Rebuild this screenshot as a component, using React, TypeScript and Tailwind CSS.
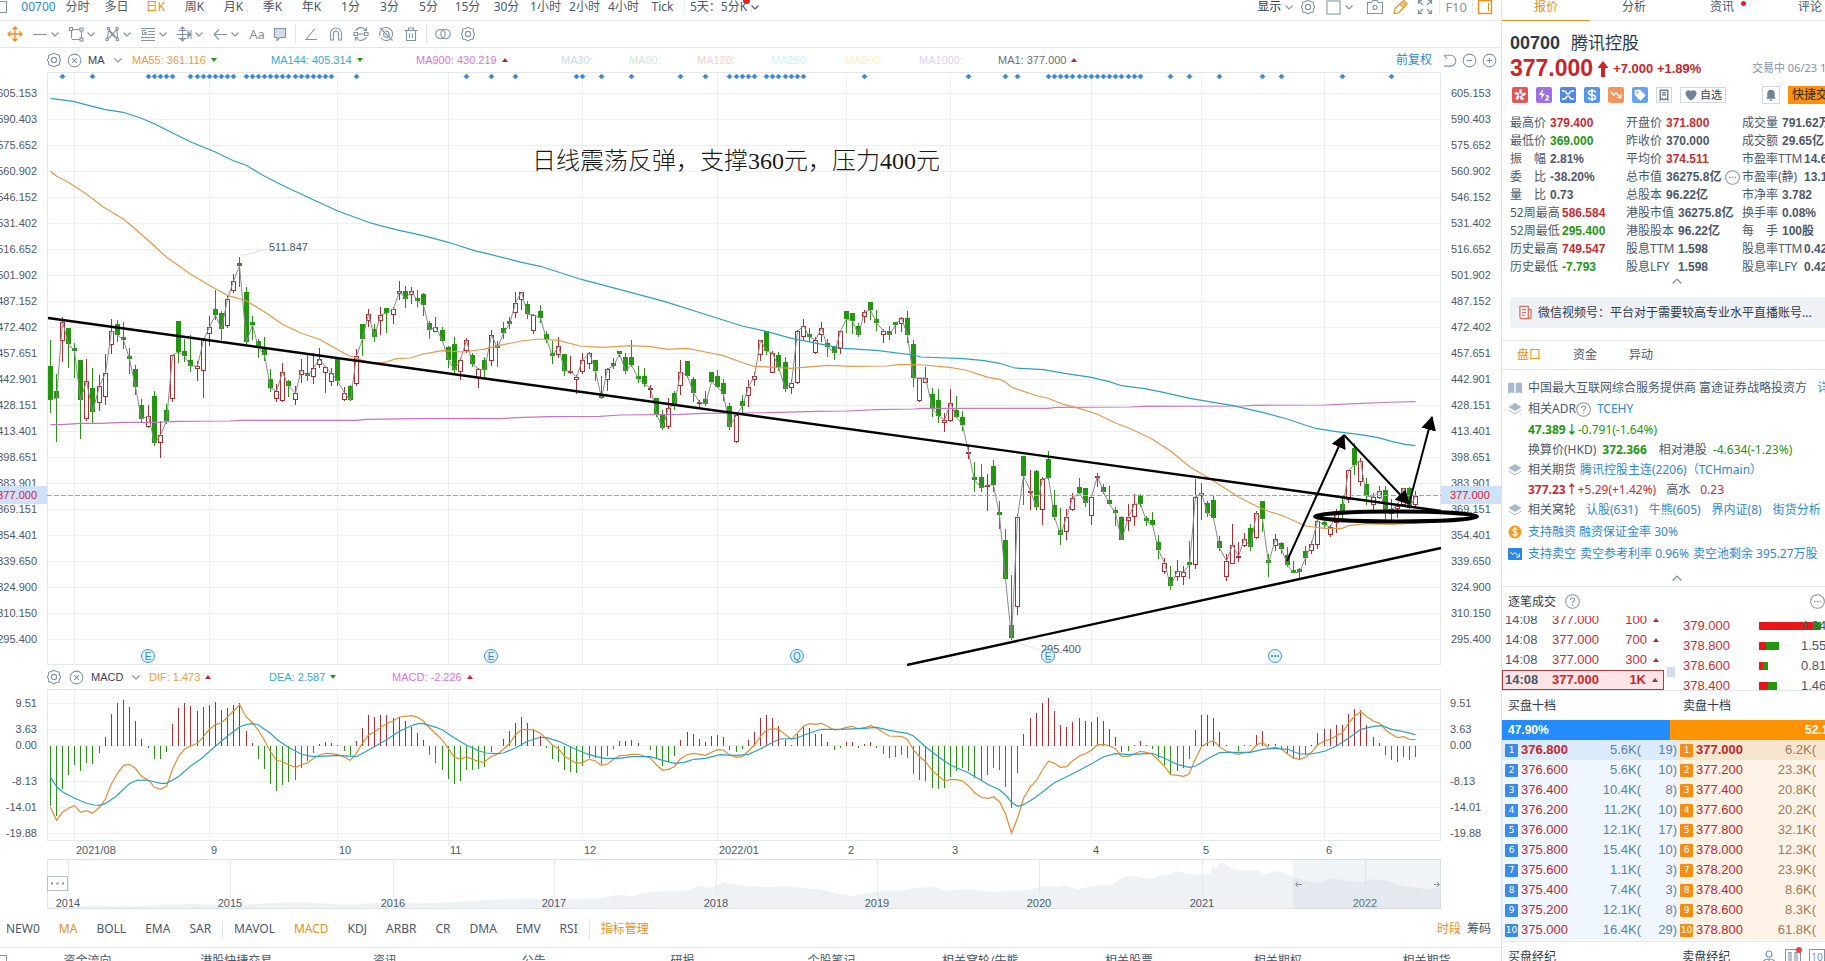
import React from "react";

/* ------------------------------------------------------------------ */
/* Chart data                                                          */
/* ------------------------------------------------------------------ */

/* Bars sit six pixels apart, with one extra pixel after every eighth bar. */
const barX = (i: number) => 50.5 + 6 * i + Math.floor(i / 8);

/* direction, high, body top, body bottom, low; in thirds of a pixel */
const CANDLES_A = `g840,918,1020,1058 g942,993,1014,1145 r772,785,844,905 g804,804,852,923 g850,864,872,953 g900,900,1020,1136
r898,964,1076,1082 g924,984,1055,1090 r945,978,1028,1052 r882,940,1010,1036 r777,814,856,882 g780,792,824,846 g786,831,840,868
g864,888,896,942 g915,927,980,1004 g1018,1035,1077,1085 r1036,1069,1102,1103 g993,1008,1149,1157 r1084,1126,1148,1193
g1031,1050,1082,1092 r886,886,1016,1025 g783,783,876,908 g838,873,888,906 g826,900,917,935 r903,918,926,962 r833,840,934,1013
r768,802,821,857 g690,747,765,780 g754,759,806,840 r708,718,797,803 r641,664,692,700 g591,609,617,680 g682,696,846,852
g768,786,795,840 g838,842,864,893 g831,862,885,902 g928,957,983,995 r972,994,1016,1025 r910,937,1022,1025 g960,963,978,1010
r978,1000,1019,1034 r898,931,946,968 g886,939,947,962 r880,925,952,973 r864,898,914,925 r918,922,940,999 r925,940,967,979
g895,898,964,977 r980,1000,1019,1022 g976,979,1019,1022 r867,889,973,977 g792,792,836,888 r747,763,782,800 g792,807,830,845
r742,766,784,824 g744,744,759,819 r741,748,766,792 r663,694,702,719 g678,694,716,743 r681,694,704,732 g690,714,722,741
g699,702,735,768 g783,790,810,837 r771,802,815,817 g801,810,842,845 g858,861,900,924 g832,852,930,942 r894,900,937,960
r834,841,873,878 g878,885,911,922 r925,927,955,984 g890,900,930,951 r810,826,902,917 g843,855,863,921`;

const CANDLES_B = `g306,324,338,357 g290,303,311,326 r216,250,278,293 r216,217,241,270 g243,251,281,298 r283,284,332,341
g255,274,293,308 g333,342,358,368 g362,400,407,432 r351,377,406,414 g402,402,453,469 r408,454,460,463 r464,472,481,523
r398,421,455,461 r397,398,433,447 g420,420,454,482 g469,521,533,537 r445,448,479,513 g414,430,438,446 g393,394,402,411
g399,411,453,461 g360,411,435,440 g438,469,476,488 g443,468,492,502 r494,505,511,533 g533,535,582,590 g571,583,623,630
r535,565,622,626 g514,519,555,570 r420,457,499,524 g424,424,467,473 g472,478,518,546 r541,547,553,564 g513,538,553,559
g457,457,487,490 g450,468,501,504 g478,489,521,543 g549,558,620,630 r580,586,667,669 g525,543,558,580 r481,502,529,560
r456,469,479,497 r361,361,406,422 g334,334,392,404 r394,400,458,458 g397,405,442,452 g411,427,506,516 r478,490,503,521
r331,334,490,491 r297,319,350,361 g323,342,350,367 r351,361,400,402 r306,325,344,365 g357,370,380,411 g378,379,398,419
r333,334,388,402 g273,273,296,338 g279,280,302,343 g309,318,345,350 r270,275,290,308 g246,247,269,300 g270,298,308,333
r327,334,344,369 g318,333,345,361 g306,307,314,341 r291,295,311,336 g273,294,345,369 g360,372,473,501 r474,475,544,545
r441,475,490,490 g504,522,564,590 g507,540,588,609 r580,601,608,637 r507,549,602,606 g528,570,590,594 g574,591,614,633
r679,697,703,718`;

const CANDLES_C = `g546,592,600,635 g553,591,623,637 r583,614,622,692 g540,558,614,635 g664,697,704,746 g747,780,896,900
g885,1035,1073,1079 r701,710,982,1006 g528,529,587,675 r570,634,640,689 g570,573,680,691 r591,598,691,736 g513,537,593,600
g630,676,712,720 g685,751,764,794 r686,712,755,780 r638,655,689,692 g594,621,638,643 g625,625,670,680 r649,650,709,735
r580,587,592,620 g613,621,635,642 g618,661,671,672 g680,690,698,738 g708,711,779,781 r672,711,724,753 r641,673,712,738
g642,646,671,681 g707,714,723,739 g696,721,735,738 g766,786,810,836 r835,848,877,882 g857,892,917,929 r840,874,892,902
r859,877,892,914 g783,847,854,898 r596,652,856,866 r610,640,647,720 g663,669,700,712 g649,660,714,714 g768,783,803,814
r823,844,892,904 r732,796,853,853 r786,829,835,846 r758,776,799,801 g731,744,801,814 r694,699,775,777 g662,663,716,756
g822,840,848,891 r762,778,799,812 g785,790,807,821 g800,826,856,860 g843,870,878,879 g865,867,876,898 g799,813,833,855
r782,791,812,821 r718,724,796,808 g724,727,735,746 r736,741,765,770 r687,703,728,758 g645,672,692,716 r570,571,660,668
g489,504,555,585 r535,543,607,619 g594,612,647,676 r640,652,676,690 r618,632,654,658 g618,630,691,716 r658,686,702,722
r668,678,686,713 r625,625,674,680 g622,625,684,688 r634,647,674,684`;

type Candle = { up: boolean; high: number; top: number; bottom: number; low: number };

const parseCandles = (src: string, base: number): Candle[] =>
  src.split(/\s+/).map((s) => {
    const [high, top, bottom, low] = s.slice(1).split(",").map((n) => Math.round((+n + base) / 3));
    return { up: s[0] === "r", high, top, bottom, low };
  });

const candles = [...parseCandles(CANDLES_A, 180), ...parseCandles(CANDLES_B, 660), ...parseCandles(CANDLES_C, 840)];

/* A curve is stored in pieces, each with its own origin and horizontal scale. */
type Piece = [originX: number, scaleX: number, originY: number, points: string];
const curve = (pieces: Piece[]) =>
  pieces
    .flatMap(([ox, sx, oy, pts]) =>
      pts.split(/\s+/).map((p) => {
        const [x, y] = p.split(",").map(Number);
        return `${(ox + x / sx).toFixed(1)},${(oy + y / 3).toFixed(1)}`;
      }),
    )
    .join(" ");

const ma144 = curve([
  [0, 3, 60, "152,115 223,125 277,139 316,149 370,157 424,175 463,191 500,210 571,245 646,276 700,302 739,316 787,345 847,376 922,411 1012,452 1105,487 1141,497 1198,511 1270,527 1345,547 1430,574"],
  [480, 3, 220, "10,98 125,127 181,139 307,179 418,208 555,245 708,293 787,318 859,334 934,355 1042,376 1090,385 1189,391 1300,405"],
  [900, 2.613, 280, "55,231 165,236 220,242 260,250 300,264 375,269 430,280 500,292 547,305 579,317 640,326 676,334 757,355 870,377 950,398 1012,417 1060,436 1090,446 1140,455 1203,464 1250,473 1284,484 1320,493 1347,497"],
]);
const ma55 = curve([
  [0, 3, 60, "152,334 170,349 205,367 260,403 310,441 370,477 406,507 460,555 500,592 571,642 646,686 685,707 739,722 800,760 847,793 904,820 958,838 994,858 1040,884 1087,901 1123,910 1150,908 1190,896 1230,894 1270,882 1327,872 1390,876 1435,870"],
  [480, 3, 220, "10,388 70,374 125,363 175,357 235,361 300,378 370,382 454,377 511,380 565,388 622,385 676,396 730,407 790,429 823,439 934,445 1042,436 1117,439 1220,438"],
  [900, 2.613, 280, "0,253 60,255 130,262 170,270 230,292 260,298 275,305 291,322 360,348 385,354 430,374 470,386 516,403 563,429 600,445 655,475 707,513 757,560 820,603 884,651 940,683 963,694 997,706 1060,738 1110,745 1156,745 1172,737 1219,731 1284,733 1347,729"],
]);
const ma900 = curve([
  [0, 3, 60, "152,1094 185,1094 240,1090 300,1090 370,1087 470,1087 535,1084 690,1083 720,1081 1069,1081 1100,1078 1240,1076 1430,1075"],
  [480, 3, 220, "60,596 110,593 210,590 360,589 420,585 600,583 670,580 870,578 1010,574 1100,573 1190,569 1300,567"],
  [900, 2.613, 280, "60,385 385,385 410,382 600,381 640,379 900,378 920,376 1110,375 1190,371 1300,366 1347,365"],
]);
const dif = curve([
  [0, 2.119, 640, "107,502 120,541 132,517 145,505 158,497 171,517 183,512 196,520 211,502 223,478 236,432 249,400 262,376 274,373 287,385 300,409 316,422 327,442 340,448 353,439 365,390 378,350 391,328 404,318 418,310 431,290 444,268 457,253 469,249 482,232 495,212 508,194 521,230 535,248 547,270 560,300 573,335 586,361 599,365 611,374 626,382 639,374 652,368 665,355 677,346 690,340 703,341 716,344 730,352 742,361 755,340 768,310 781,285 794,275 807,262 819,252 832,243 847,231 872,227 885,232 897,243 909,262 924,282 938,302 950,325 962,350 976,358 988,350 1001,358 1014,364 1026,367 1040,350 1054,342 1067,328 1080,310 1092,285 1105,269 1118,268 1131,270 1145,280 1158,297 1171,316 1184,328 1196,348 1209,360 1222,370 1235,367 1248,358 1261,362 1274,376 1287,372 1299,359 1313,347 1326,346 1338,343 1352,343 1378,354 1391,374 1404,391 1416,388 1429,380 1441,358 1455,344 1470,340 1495,346 1508,337 1520,329"],
  [720, 2.01, 640, "7,330 19,345 33,352 45,350 57,333 69,316 81,290 93,270 106,266 118,268 132,285 144,298 155,280 168,258 180,251 192,253 204,250 230,270 242,268 254,262 266,259 278,266 290,263 303,257 315,265 340,288 364,289 376,298 389,330 401,350 413,365 427,392 439,408 451,422 463,419 475,419 487,422 499,437 512,458 525,472 538,475 550,471 562,485 574,523 586,580 598,535 610,475 624,440 636,422 648,390 660,364 672,370 684,382 697,380 709,362 723,347 735,341 747,330 759,314 771,313 783,318 795,326 807,349 821,349 833,341 845,334 857,337 869,343 881,360 894,380 906,404 920,406 932,409 943,401 956,355 968,320 980,308 992,302 1004,320 1018,334 1030,338 1042,343 1054,338 1066,336 1078,315 1091,307 1103,326 1117,322 1129,328 1141,342 1153,354 1165,358 1177,352 1189,337 1201,315 1215,303 1227,298 1239,287 1251,278 1263,250 1276,228 1288,215 1300,230 1314,244 1326,250 1338,270 1350,283 1362,293 1374,290 1386,298 1398,299"],
]);
const dea = curve([
  [0, 2.119, 640, "107,412 120,440 132,455 158,475 183,490 200,495 211,496 223,491 245,470 274,431 290,421 310,420 340,430 353,430 378,410 404,378 425,358 457,318 482,288 508,260 521,254 535,251 547,254 573,280 586,298 611,322 639,343 660,349 680,349 716,346 755,350 781,330 819,299 847,273 872,257 885,251 897,251 924,262 938,270 962,293 988,315 1014,332 1030,339 1054,341 1067,339 1092,324 1118,304 1145,292 1158,293 1184,304 1222,329 1248,344 1280,355 1313,355 1338,350 1378,350 1404,361 1429,370 1450,367 1470,358 1495,355 1520,346"],
  [720, 2.01, 640, "0,344 33,346 57,343 81,327 106,307 120,297 150,296 180,279 204,268 242,268 290,265 315,262 340,271 376,280 389,288 413,320 439,350 463,375 499,398 538,433 562,450 574,465 586,487 598,499 610,494 636,470 672,428 709,401 747,371 771,350 795,341 820,344 869,340 894,355 920,374 943,382 956,378 980,356 1004,338 1020,337 1066,337 1091,328 1117,325 1141,328 1165,342 1189,342 1215,334 1239,318 1263,295 1288,268 1314,259 1330,257 1350,268 1374,275 1398,284"],
]);
const history = curve([
  [0, 2.119, 640, "101,802 180,799 200,796 260,800 330,795 390,792 450,793 470,797 560,790 630,786 680,790 740,794 780,790 830,788 900,790 980,785 1030,780 1080,777 1120,776 1170,780 1230,777 1270,775 1310,764 1340,768 1370,758 1400,754 1460,750 1485,735 1497,742 1510,743 1520,734"],
  [720, 2.01, 640, "0,732 8,725 15,727 20,734 30,731 40,738 80,740 110,741 130,738 160,743 200,748 215,753 240,762 265,768 290,762 320,753 370,751 395,744 430,740 450,752 500,747 550,755 620,750 650,738 680,740 690,736 720,748 740,740 790,733 800,720 815,710 835,708 850,714 870,715 885,706 900,704 920,694 940,702 965,705 985,700 992,676 997,686 1005,670 1012,668 1025,682 1035,690 1060,693 1080,690 1095,703 1120,693 1140,702 1155,714 1180,722 1200,728 1230,714 1260,722 1290,726 1310,718 1340,722 1360,735 1390,742 1420,747 1449,742"],
]);

/* Tips of the histogram bars, in thirds of a pixel below the pane's origin */
const HIST = [
  494, 524, 444, 402, 371, 390, 365, 368, 336, 289, 220, 187, 178, 198, 240, 295, 320, 354, 354, 333, 250, 202, 187, 196, 210,
  198, 192, 183, 208, 202, 192, 187, 270, 306, 354, 383, 429, 449, 432, 423, 416, 380, 359, 336, 309, 303, 306, 312, 330, 341,
  300, 261, 222, 228, 222, 222, 231, 228, 240, 258, 276, 297, 342, 365, 387, 414, 429, 420, 387, 387, 384, 378, 333, 316, 294,
  270, 246, 228, 246, 264, 285, 321, 354, 362, 387, 392, 395, 375, 350, 350, 369, 345, 324, 300, 300, 297, 307, 316, 326, 355,
  375, 362, 345, 297, 273, 279, 294, 303, 285, 282, 288, 327, 333, 323, 297, 273, 231, 222, 231, 255, 297, 312, 279, 258, 262,
  279, 279, 303, 326, 321, 303, 303, 320, 309, 303, 320, 338, 350, 348, 342, 350, 398, 416, 420, 441, 443, 440, 407, 390, 380,
  390, 411, 416, 402, 380, 386, 437, 501, 396, 279, 231, 216, 186, 171, 210, 252, 258, 243, 231, 240, 243, 228, 240, 264, 289,
  333, 329, 312, 300, 312, 323, 350, 372, 398, 390, 380, 353, 267, 222, 222, 231, 273, 312, 316, 330, 312, 312, 282, 270, 309,
  309, 320, 338, 353, 357, 341, 312, 276, 264, 264, 252, 252, 219, 204, 207, 252, 288, 306, 341, 356, 362, 348, 356, 348,
];

const range = (a: number, b: number) => Array.from({ length: b - a + 1 }, (_, i) => a + i);
const EVENTS = [
  2, 7, ...range(16, 20), ...range(23, 30), ...range(32, 46), 50, 68, 72, 76, 86, 87, 90, 95, 103, 107, ...range(111, 115),
  ...range(117, 123), 133, 150, 156, 158, ...range(163, 178), 183, 186, 191, 198, 201, 211, 219,
];

const PRICES = [
  "605.153", "590.403", "575.652", "560.902", "546.152", "531.402", "516.652", "501.902", "487.152", "472.402", "457.651",
  "442.901", "428.151", "413.401", "398.651", "383.901", "369.151", "354.401", "339.650", "324.900", "310.150", "295.400",
];
const MONTHS: [number, string][] = [
  [74, "2021/08"], [209, "9"], [337, "10"], [448, "11"], [582, "12"], [717, "2022/01"], [846, "2"], [950, "3"], [1091, "4"],
  [1201, "5"], [1324, "6"],
];
const MACD_TICKS: [number, string][] = [
  [703, "9.51"], [729, "3.63"], [745, "0.00"], [781, "-8.13"], [807, "-14.01"], [833, "-19.88"],
];
const YEARS: [number, string][] = [
  [68, "2014"], [230, "2015"], [393, "2016"], [554, "2017"], [716, "2018"], [877, "2019"], [1039, "2020"], [1202, "2021"],
  [1365, "2022"],
];

const GREEN = "#22960f";
const RED = "#b02a2e";
const GRID = "#eceff1";
const AXIS = "#4c5869";

/* ------------------------------------------------------------------ */
/* Icons                                                               */
/* ------------------------------------------------------------------ */

const Icon = ({ children, size = 16, box = 16, className = "" }: { children: React.ReactNode; size?: number; box?: number; className?: string }) => (
  <svg width={size} height={size} viewBox={`0 0 ${box} ${box}`} fill="none" stroke="currentColor" strokeWidth={1.1} className={`shrink-0 ${className}`} aria-hidden="true">
    {children}
  </svg>
);

const Chevron = ({ up = false, size = 8 }: { up?: boolean; size?: number }) => (
  <Icon size={size} box={8}>
    <path d={up ? "M.5 6 4 2.5 7.5 6" : "M.5 2.5 4 6l3.500-3.500"} />
  </Icon>
);
const Gear = ({ size = 16 }: { size?: number }) => (
  <Icon size={size}>
    <path d="M8 1.200c1 0 1.500 1.100 2.400 1.400.9.300 2-.2 2.700.6.700.8.100 1.700.3 2.600.2.900 1.200 1.300 1.200 2.200s-1 1.300-1.200 2.200c-.2.900.4 1.800-.3 2.600-.7.800-1.800.3-2.700.6-.9.300-1.400 1.400-2.400 1.400s-1.500-1.100-2.400-1.400c-.9-.3-2 .2-2.700-.6-.7-.8-.1-1.700-.3-2.600C2.400 9.300 1.400 8.900 1.400 8s1-1.300 1.200-2.200c.2-.9-.4-1.800.3-2.600.7-.8 1.800-.3 2.700-.6.9-.3 1.400-1.400 2.400-1.400Z" />
    <circle cx="8" cy="8" r="2.600" />
  </Icon>
);
const CircleX = () => (
  <Icon size={15}>
    <circle cx="8" cy="8" r="6.800" />
    <path d="m5.500 5.500 5 5m0-5-5 5" />
  </Icon>
);
const Triangle = ({ up, color }: { up: boolean; color: string }) => (
  <svg width="6" height="4" viewBox="0 0 6 4" className="shrink-0" aria-hidden="true">
    <path d={up ? "M0 4 3 0l3 4Z" : "M0 0h6L3 4Z"} fill={color} />
  </svg>
);
const Question = () => (
  <Icon size={15}>
    <circle cx="8" cy="8" r="7.300" />
    <path d="M5.800 6.300c0-1.300 1-2.100 2.200-2.100s2.200.8 2.200 2c0 1.600-2.200 1.700-2.200 3.300M8 11.200v1.200" strokeWidth="1.200" />
  </Icon>
);
const Ellipsis = () => (
  <Icon size={15}>
    <circle cx="8" cy="8" r="7.300" />
    <path d="M4.200 8h1.600M7.200 8h1.600M10.200 8h1.600" strokeWidth="1.600" />
  </Icon>
);

const drawTools: [string, React.ReactNode][] = [
  ["线段", <path d="M1 8.500h14" />],
  ["形状", <g><path d="M3.500 4.500v8M5 3.500h7.500M13.500 5v7M4 13.500h8" /><path d="M1.500 1.500h3v3h-3zM12 2h3v3h-3zM12 12h3v3h-3z" fill="#fff" /></g>],
  ["形态", <g><path d="M3 13 5 3.500 8 9l5-6 .500 10L8 9 3 13.500M5 3.500 13.500 13" /><circle cx="4.500" cy="2.500" r="1.300" fill="#fff" /><circle cx="13" cy="2.500" r="1.300" fill="#fff" /><circle cx="3" cy="13.500" r="1.300" fill="#fff" /><circle cx="13.500" cy="13.500" r="1.300" fill="#fff" /></g>],
  ["黄金分割", <path d="M1 2.500h14M8 5.500h7M8 8.500h7M1 11.500h14M1 14.500h14M6 4.500H2.500v4H6V6.500H4" />],
  ["测量", <path d="M6.500 1v14M4.500 3l2-2 2 2M4.500 13l2 2 2-2M.5 8.500h14M12.500 6.500l2 2-2 2M2.500 4.500h8M2.500 12.500h8M12 4v9M15 4v9" />],
  ["箭头", <path d="M15 8.500H2.500M7 3.500l-5 5 5 5" />],
];

const editTools: [string, React.ReactNode][] = [
  ["角度", <path d="M11.500 3 3 13.500h11" />],
  ["磁吸", <path d="M2.500 14V7.500a5.500 5.500 0 0 1 11 0V14h-3V7.500a2.500 2.500 0 0 0-5 0V14Z" />],
  ["连续绘图", <g><path d="M2.500 5A6.300 6.300 0 0 1 13 4M13.500 11A6.300 6.300 0 0 1 3 12M13.500 1.500V4.500h-3M2.500 14.500v-3h3" /><rect x="1" y="6.500" width="3.500" height="3" /><rect x="11.500" y="6.500" width="3.500" height="3" /><path d="M4.500 8h7" /></g>],
  ["隐藏画线", <g><path d="M4 3a6.500 6.500 0 1 1-1 9M2.500 4.500A6.500 6.500 0 0 0 2 10M2 2l12.500 12.500M7 5l3.500 1 1 4M5.500 7l.5 3.500 4 1" /></g>],
  ["删除", <path d="M1.500 4.500h13M5.500 4V2h5v2M3.500 5v9.500h9V5M6.500 7.500v4.500M9.500 7.500v4.500" />],
];

/* ------------------------------------------------------------------ */
/* Left side                                                           */
/* ------------------------------------------------------------------ */

const PERIODS = ["00700", "分时", "多日", "日K", "周K", "月K", "季K", "年K", "1分", "3分", "5分", "15分", "30分", "1小时", "2小时", "4小时", "Tick"];

function PeriodBar() {
  return (
    <nav className="flex h-[21px] items-center border-b border-[#e3e6ea] pb-[6px] text-[12px] leading-[14px] text-[#4c5869]">
      <button aria-label="收起" className="h-3 w-[7px] shrink-0 border border-l-0 border-[#8492a3]" />
      <div className="ml-3 flex">
        {PERIODS.map((p, i) => (
          <button key={p} className={`w-[39px] text-center ${i === 0 ? "text-[#2e86d8]" : i === 3 ? "text-[#ee8d1d]" : ""}`}>
            {p}
          </button>
        ))}
      </div>
      <button className="relative ml-[2px] flex items-center gap-1 border-l border-[#e9ecef] pl-[5px]">
        5天：5分K
        <Chevron />
        <span className="absolute -top-[3px] right-[9px] size-[7px] rounded-full bg-[#e3202a]" />
      </button>
      <div className="ml-auto flex items-center pr-2 text-[#8492a3]">
        <button className="flex items-center gap-1 text-[#2f3a48]">
          显示
          <span className="text-[#8492a3]"><Chevron /></span>
        </button>
        <button aria-label="设置" className="ml-[7px]"><Gear /></button>
        <button aria-label="布局" className="ml-[10px] flex items-center gap-1">
          <Icon size={15}><rect x="1" y="1" width="14" height="14" /></Icon>
          <Chevron />
        </button>
        <button aria-label="截图" className="ml-[14px]">
          <Icon><path d="M.5 3.500h4L6 1.500h4l1.500 2h4v11H.5Z" /><circle cx="8" cy="8.500" r="2" /></Icon>
        </button>
        <button aria-label="画线" className="ml-[9px] text-[#ee8d1d]">
          <Icon><path d="M10 3 12 1.500l3 3L13.500 6.500 6.500 14 2 14.500 3 9.500ZM8 5l3.500 3.500M10 3l3.500 3.500" strokeWidth="1.200" /></Icon>
        </button>
        <button aria-label="全屏" className="ml-[9px]">
          <Icon><path d="M1.500 5V1.500H5M1.500 1.500 6 6M11 1.500h3.500V5M14.500 1.500 10 6M1.500 11v3.500H5M1.500 14.500 6 10M11 14.500h3.500V11M14.500 14.500 10 10" strokeWidth="1.200" /></Icon>
        </button>
        <button className="ml-[6px] border-x border-[#e9ecef] px-[5px] text-[13px]">F10</button>
        <button aria-label="侧栏" className="ml-[4px] text-[#ee8d1d]">
          <Icon><rect x="1.500" y="1.500" width="13" height="13" strokeWidth="1.400" /><path d="M11.500 4v8" /></Icon>
        </button>
      </div>
    </nav>
  );
}

function DrawingBar() {
  return (
    <div className="flex h-[27px] items-center border-b border-[#e3e6ea] text-[#8492a3]">
      <button aria-label="移动" className="mr-px flex w-[30px] justify-center text-[#ee8d1d]">
        <Icon><path d="M8 1v14M1 8h14M5.500 3.500 8 1l2.500 2.500M5.500 12.500 8 15l2.500-2.500M3.500 5.500 1 8l2.500 2.500M12.500 5.500 15 8l-2.500 2.500" strokeWidth="1.300" /></Icon>
      </button>
      {drawTools.map(([name, art]) => (
        <button key={name} aria-label={name} className="flex w-9 items-center gap-[3px] pl-px">
          <Icon>{art}</Icon>
          <Chevron />
        </button>
      ))}
      <button className="w-[20px] text-center text-[13px] leading-4">Aa</button>
      <button aria-label="批注" className="flex w-[26px] justify-center">
        <Icon><path d="M2.500 2.500h11v9H8L5 14.500v-3H2.500Z" fill="#d3dce8" /></Icon>
      </button>
      <span className="mx-[2px] h-5 w-px bg-[#e3e6ea]" />
      {editTools.map(([name, art]) => (
        <button key={name} aria-label={name} className="flex w-[25px] justify-center"><Icon>{art}</Icon></button>
      ))}
      <span className="mx-[3px] h-5 w-px bg-[#e3e6ea]" />
      <button aria-label="对比" className="flex w-[25px] justify-center">
        <Icon><circle cx="5.500" cy="8" r="4.800" /><circle cx="10.500" cy="8" r="4.800" /></Icon>
      </button>
      <button aria-label="画线设置" className="flex w-[25px] justify-center"><Gear /></button>
    </div>
  );
}

function MaLegend() {
  return (
    <div className="flex h-6 items-center pl-[46px] pr-[4px] font-['Liberation_Sans','Noto_Sans_CJK_SC',sans-serif] text-[11px] leading-[14px] text-[#8492a3]">
      <button aria-label="均线设置"><Gear /></button>
      <button aria-label="关闭均线" className="ml-[5px]"><CircleX /></button>
      <button className="ml-[6px] flex w-[44px] items-center gap-[9px] text-[#39424f]">
        MA <span className="text-[#8492a3]"><Chevron /></span>
      </button>
      <span className="flex w-[139px] items-center gap-[5px] text-[#ee9a3c]">MA55: 361.116 <Triangle up={false} color={GREEN} /></span>
      <span className="flex w-[145px] items-center gap-[5px] text-[#35a8cf]">MA144: 405.314 <Triangle up={false} color={GREEN} /></span>
      <span className="flex w-[145px] items-center gap-[5px] text-[#dd73cd]">MA900: 430.219 <Triangle up color={RED} /></span>
      <span className="w-[68px] text-[#c6dcf0]">MA30:</span>
      <span className="w-[68px] text-[#cfe9dc]">MA60:</span>
      <span className="w-[74px] text-[#f8d0d0]">MA120:</span>
      <span className="w-[74px] text-[#c9f4f6]">MA250:</span>
      <span className="w-[74px] text-[#fbeccb]">MA500:</span>
      <span className="w-[79px] text-[#e2cdf3]">MA1000:</span>
      <span className="flex items-center gap-[4px] text-[#6b6f75]">MA1: 377.000 <Triangle up color={RED} /></span>
      <div className="ml-auto flex items-center gap-[5px]">
        <button className="mr-[5px] text-[12px] text-[#2e86d8]">前复权</button>
        <button aria-label="重置"><Icon size={15}><path d="M2 2.500h7a5.500 5.500 0 0 1 0 11.500H2M5.500 6 2 2.500" /></Icon></button>
        <button aria-label="缩小"><Icon size={15}><circle cx="8" cy="8" r="6.800" /><path d="M5 8h6" strokeWidth="1.300" /></Icon></button>
        <button aria-label="放大"><Icon size={15}><circle cx="8" cy="8" r="6.800" /><path d="M5 8h6M8 5v6" strokeWidth="1.300" /></Icon></button>
      </div>
    </div>
  );
}

const Badge = ({ x, text }: { x: number; text: string }) => (
  <g>
    <circle cx={x} cy="656" r="6.500" fill="#e2f3fd" stroke="#3f92d8" />
    <text x={x} y="660" textAnchor="middle" fontSize="10" fill="#2e86d8">{text}</text>
  </g>
);

function PriceChart() {
  const closes = candles.map((c, i) => `${barX(i)},${c.up ? c.top : c.bottom}`).join(" ");
  return (
    <svg viewBox="0 72 1501 594" className="block w-full font-['Liberation_Sans','Noto_Sans_CJK_SC',sans-serif]" role="img" aria-label="日K线图">
      <defs>
        <marker id="head" markerWidth="14" markerHeight="16" refX="13" refY="8" orient="auto" markerUnits="userSpaceOnUse">
          <path d="M0 0.500 14 8 0 15.500Z" fill="#000" />
        </marker>
      </defs>
      <g stroke={GRID} shapeRendering="crispEdges">
        {PRICES.map((p, i) => <line key={p} x1="47" x2="1441" y1={93.5 + 26 * i} y2={93.5 + 26 * i} />)}
        {MONTHS.map(([x]) => <line key={x} x1={x + 0.5} x2={x + 0.5} y1="72" y2="664" />)}
        <rect x="47.5" y="72.5" width="1393" height="592" fill="none" stroke="#e2e8ec" />
      </g>
      <g fontSize="11" fill={AXIS}>
        {PRICES.map((p, i) => (
          <g key={p}>
            <text x="37" y={97 + 26 * i} textAnchor="end">{p}</text>
            <text x="1451" y={97 + 26 * i}>{p}</text>
          </g>
        ))}
      </g>
      <g fill="#3a86d2">
        {EVENTS.map((i) => <path key={i} d={`M${barX(i) - 2.5} 76.500l2.500-2.500 2.500 2.500-2.500 2.500Z`} stroke="#3a86d2" strokeWidth=".6" />)}
      </g>
      <g shapeRendering="crispEdges">
        {candles.map((c, i) => {
          const x = barX(i);
          const h = Math.max(c.bottom - c.top, 2);
          return c.up ? (
            <g key={i} stroke={RED}>
              <path d={`M${x} ${c.high}V${c.top}M${x} ${c.top + h}V${c.low}`} />
              <rect x={x - 2} y={c.top + 0.5} width="4" height={h - 1} fill="none" />
            </g>
          ) : (
            <g key={i}>
              <path d={`M${x} ${c.high}V${c.low}`} stroke={GREEN} />
              <rect x={x - 2.5} y={c.top} width="5" height={h} fill={GREEN} />
            </g>
          );
        })}
      </g>
      <g fill="none">
        <polyline points={closes} stroke="#8a8a8a" />
        <polyline points={ma900} stroke="#c873ca" strokeWidth="1.200" />
        <polyline points={ma55} stroke="#e8964a" strokeWidth="1.200" />
        <polyline points={ma144} stroke="#2f9dc8" strokeWidth="1.200" />
      </g>
      <path d="M240 256 268 249M1012 641 1040 650" stroke="#e3e6ea" />
      <g fontSize="11" fill={AXIS}>
        <text x="269" y="251">511.847</text>
        <text x="1041" y="653">295.400</text>
      </g>
      <line x1="47" x2="1441" y1="495.500" y2="495.500" stroke="#c9a24c" strokeDasharray="5 2" />
      <rect x="0" y="486" width="47" height="18" fill="#cfe1f8" />
      <rect x="1441" y="486" width="60" height="18" fill="#cfe1f8" />
      <g fontSize="11" fill="#d0202c">
        <text x="37" y="499" textAnchor="end">377.000</text>
        <text x="1450" y="499">377.000</text>
      </g>
      <g stroke="#000" strokeWidth="2.400" fill="none">
        <line x1="48" y1="318" x2="1441" y2="511" />
        <line x1="907" y1="665" x2="1441" y2="548" />
        <line x1="1287" y1="561" x2="1344" y2="435" strokeWidth="2" markerEnd="url(#head)" />
        <line x1="1344" y1="435" x2="1409" y2="504" strokeWidth="2" markerEnd="url(#head)" />
        <line x1="1409" y1="504" x2="1432" y2="417" strokeWidth="2" markerEnd="url(#head)" />
        <ellipse cx="1396" cy="516.500" rx="81" ry="5" strokeWidth="4" />
      </g>
      <Badge x={148} text="E" />
      <Badge x={491} text="E" />
      <Badge x={797} text="Q" />
      <Badge x={1048} text="E" />
      <circle cx="1275" cy="656" r="6.500" fill="#e2f3fd" stroke="#3f92d8" />
      <path d="M1271 656h2M1274 656h2M1277 656h2" stroke="#2e86d8" strokeWidth="1.500" />
      <text x="532" y="169" fontSize="24" fill="#1a1a1a" className="font-['Liberation_Serif','Noto_Sans_CJK_SC',serif] font-light">
        日线震荡反弹，支撑360元，压力400元
      </text>
    </svg>
  );
}

function MacdLegend() {
  return (
    <div className="flex h-[22px] items-center pl-[46px] font-['Liberation_Sans',sans-serif] text-[11px] leading-[14px] text-[#8492a3]">
      <button aria-label="MACD设置"><Gear /></button>
      <button aria-label="关闭MACD" className="ml-[7px]"><CircleX /></button>
      <button className="ml-[7px] flex w-[58px] items-center gap-[9px] text-[#39424f]">
        MACD <span className="text-[#8492a3]"><Chevron /></span>
      </button>
      <span className="flex w-[120px] items-center gap-[5px] text-[#ee9a3c]">DIF: 1.473 <Triangle up color="#d0202c" /></span>
      <span className="flex w-[123px] items-center gap-[5px] text-[#35a8cf]">DEA: 2.587 <Triangle up={false} color={GREEN} /></span>
      <span className="flex items-center gap-[5px] text-[#dd73cd]">MACD: -2.226 <Triangle up color="#d0202c" /></span>
    </div>
  );
}

function MacdChart() {
  return (
    <svg viewBox="0 688 1501 170" className="block w-full font-['Liberation_Sans',sans-serif]" role="img" aria-label="MACD">
      <g stroke={GRID} shapeRendering="crispEdges">
        {MACD_TICKS.map(([y]) => <line key={y} x1="47" x2="1441" y1={y + 0.5} y2={y + 0.5} />)}
        {MONTHS.map(([x]) => <line key={x} x1={x + 0.5} x2={x + 0.5} y1="689" y2="840" />)}
        <rect x="47.5" y="689.5" width="1393" height="151" fill="none" stroke="#e2e8ec" />
      </g>
      <g shapeRendering="crispEdges">
        {HIST.map((v, i) => (
          <line key={i} x1={barX(i)} x2={barX(i)} y1="745.500" y2={Math.round(640 + v / 3) + 0.5} stroke={v < 316 ? RED : GREEN} />
        ))}
      </g>
      <polyline points={dif} fill="none" stroke="#e28c34" strokeWidth="1.200" />
      <polyline points={dea} fill="none" stroke="#2f9fc0" strokeWidth="1.200" />
      <g fontSize="11" fill={AXIS}>
        {MACD_TICKS.map(([y, t]) => (
          <g key={t}>
            <text x="37" y={y + 4} textAnchor="end">{t}</text>
            <text x="1450" y={y + 4}>{t}</text>
          </g>
        ))}
        {MONTHS.map(([x, t]) => <text key={t} x={x + 2} y="854">{t}</text>)}
      </g>
    </svg>
  );
}

function Navigator() {
  return (
    <svg viewBox="0 858 1501 52" className="block w-full font-['Liberation_Sans',sans-serif]" role="img" aria-label="时间范围">
      <polygon points={`47,908 ${history} 1441,908`} fill="#eff2f5" />
      <g stroke="#e6eaed" shapeRendering="crispEdges">
        {YEARS.map(([x]) => <line key={x} x1={x + 0.5} x2={x + 0.5} y1="859" y2="897" />)}
        <rect x="47.500" y="859.500" width="1393" height="49" fill="none" stroke="#dfe3e7" />
      </g>
      <g fontSize="11" fill={AXIS} textAnchor="middle">
        {YEARS.map(([x, t]) => <text key={t} x={x} y="907">{t}</text>)}
      </g>
      <rect x="1293" y="859" width="148" height="50" fill="#b8c6d6" fillOpacity=".2" />
      <g stroke="#7e90a5" fill="none">
        <path d="M1302 884.500h-6M1298 882l-2.500 2.500 2.500 2.500M1434 884.500h5M1437 882l2.500 2.500-2.500 2.500" />
        <rect x="47.500" y="876.500" width="20" height="14" fill="#fff" stroke="#b6c1cf" />
        <path d="M51 883.500h2M56.500 883.500h2M62 883.500h2" strokeWidth="2" />
      </g>
    </svg>
  );
}

const INDICATORS_MAIN = ["NEW0", "MA", "BOLL", "EMA", "SAR"];
const INDICATORS_SUB = ["MAVOL", "MACD", "KDJ", "ARBR", "CR", "DMA", "EMV", "RSI"];
const PAGES = ["资金流向", "港股快捷交易", "资讯", "公告", "研报", "个股笔记", "相关窝轮/牛熊", "相关股票", "相关期权", "相关期货"];

function IndicatorBar() {
  return (
    <div className="flex h-[38px] items-center gap-[19px] border-b border-[#e3e6ea] pl-[6px] pr-[10px] text-[12px] leading-4 text-[#4c5869]">
      {INDICATORS_MAIN.map((t) => <button key={t} className={t === "MA" ? "text-[#ee8d1d]" : ""}>{t}</button>)}
      <span className="-mx-2 h-5 w-px bg-[#e3e6ea]" />
      {INDICATORS_SUB.map((t) => <button key={t} className={t === "MACD" ? "text-[#ee8d1d]" : ""}>{t}</button>)}
      <span className="-mx-2 h-5 w-px bg-[#e3e6ea]" />
      <button className="text-[#ee8d1d]">指标管理</button>
      <div className="ml-auto flex gap-[6px]">
        <button className="text-[#ee8d1d]">时段</button>
        <button>筹码</button>
      </div>
    </div>
  );
}

function PageTabs() {
  return (
    <nav className="flex h-[26px] shrink-0 items-center text-[12px] leading-4 text-[#4c5869]">
      <button aria-label="展开" className="h-[13px] w-[7px] shrink-0 border border-l-0 border-[#8492a3]" />
      <div className="ml-[6px] flex flex-1">
        {PAGES.map((p) => <button key={p} className="flex-1 text-center">{p}</button>)}
      </div>
    </nav>
  );
}

/* ------------------------------------------------------------------ */
/* Right side                                                          */
/* ------------------------------------------------------------------ */

type Tone = "r" | "g" | "n";
const tone: Record<Tone, string> = { r: "text-[#c92a2e]", g: "text-[#22960f]", n: "text-[#4c5869]" };
type Stat = [label: string, value: string, tone: Tone, width: 3 | 4 | 5];

const STATS: Stat[] = [
  ["最高价", "379.400", "r", 3], ["开盘价", "371.800", "r", 3], ["成交量", "791.62万", "n", 3],
  ["最低价", "369.000", "g", 3], ["昨收价", "370.000", "n", 3], ["成交额", "29.65亿", "n", 3],
  ["振　幅", "2.81%", "n", 3], ["平均价", "374.511", "r", 3], ["市盈率TTM", "14.68", "n", 5],
  ["委　比", "-38.20%", "n", 3], ["总市值", "36275.8亿", "n", 3], ["市盈率(静)", "13.13", "n", 5],
  ["量　比", "0.73", "n", 3], ["总股本", "96.22亿", "n", 3], ["市净率", "3.782", "n", 3],
  ["52周最高", "586.584", "r", 4], ["港股市值", "36275.8亿", "n", 4], ["换手率", "0.08%", "n", 3],
  ["52周最低", "295.400", "g", 4], ["港股股本", "96.22亿", "n", 4], ["每　手", "100股", "n", 3],
  ["历史最高", "749.547", "r", 4], ["股息TTM", "1.598", "n", 4], ["股息率TTM", "0.42%", "n", 5],
  ["历史最低", "-7.793", "g", 4], ["股息LFY", "1.598", "n", 4], ["股息率LFY", "0.42%", "n", 5],
];
const labelWidth = { 3: "w-10", 4: "w-[52px]", 5: "w-[62px]" };

const Tile = ({ color, children }: { color: string; children: React.ReactNode }) => (
  <span className={`flex size-4 items-center justify-center rounded-[2px] text-white ${color}`}>{children}</span>
);

function Quote() {
  return (
    <section className="pl-2">
      <h1 className="mt-[10px] flex h-6 items-center text-[#2f3a48]">
        <span className="font-['Liberation_Sans'] text-[18px] font-bold">00700</span>
        <span className="ml-[11px] text-[17px] leading-6">腾讯控股</span>
      </h1>
      <div className="flex h-[27px] items-center font-['Liberation_Sans','Noto_Sans_CJK_SC',sans-serif] text-[#cc2229]">
        <span className="text-[23px] font-bold leading-[27px]">377.000</span>
        <svg width="12" height="16" viewBox="0 0 12 16" className="ml-[4px]" aria-hidden="true"><path d="M6 0 11.500 7H8v9H4V7H.5Z" fill="#cc2229" /></svg>
        <span className="ml-[4px] text-[13px] font-bold">+7.000 +1.89%</span>
        <span className="ml-auto w-[73px] font-['Noto_Sans','Noto_Sans_CJK_SC',sans-serif] text-[11px] text-[#8492a3]">交易中 06/23 14:08</span>
      </div>
      <div className="flex h-[26px] items-center gap-2 pl-[2px] text-[#6f8299]">
        <Tile color="bg-[#e45656]">
          <Icon size={14}><g fill="#fff" stroke="none">{[0, 72, 144, 216, 288].map((a) => <ellipse key={a} cx="8.500" cy="4" rx="1.600" ry="2.800" transform={`rotate(${a} 8 8)`} />)}</g></Icon>
        </Tile>
        <Tile color="bg-[#a06fe8]">
          <Icon size={14}><path d="M7 1 2 8h3.500L4.500 13 9 6.500H6Z" fill="#fff" stroke="none" /><path d="M10 9.500c1-1.300 3.500-.8 3 .8-.3 1-2 1.700-3 3.200h3.500" strokeWidth="1.400" /></Icon>
        </Tile>
        <Tile color="bg-[#4f86e8]">
          <Icon size={14}><path d="M1 3.500h3c2 0 2 3.500 4 3.500s2-3.500 4-3.500h3M1 12.500h3c2 0 2-3.500 4-3.500s2 3.500 4 3.500h3" strokeWidth="1.700" /></Icon>
        </Tile>
        <Tile color="bg-[#5496ec]">
          <Icon size={14}><path d="M12 5c0-1.300-1.700-2.200-4-2.200S4 4 4 5.400 5.500 7.700 8 8s4 1 4 2.500-1.700 2.700-4 2.700-4-1-4-2.500M8 1v14" strokeWidth="1.700" /></Icon>
        </Tile>
        <Tile color="bg-[#f5945a]">
          <Icon size={14}><path d="m1.500 4 4 4 2.500-2.500 5 5M13.500 7v4h-4" strokeWidth="1.700" /></Icon>
        </Tile>
        <Tile color="bg-[#67a2ee]">
          <Icon size={14}><path d="M2 3v5l6.500 6.500 6-6L8 2H3Z" fill="#fff" stroke="none" /><circle cx="5" cy="5" r="1.200" fill="#67a2ee" stroke="none" /></Icon>
        </Tile>
        <button aria-label="笔记" className="flex size-4 items-center justify-center border border-[#d0d7e0]">
          <Icon size={12}><path d="M3 1.500h10v13l-2.500-1.500L8 14.500 5.500 13 3 14.500ZM5.500 5h5M5.500 8h5" strokeWidth="2" /></Icon>
        </button>
        <button className="flex h-4 w-[46px] items-center justify-center gap-[2px] border border-[#d0d7e0] text-[11px] leading-[14px] text-[#39424f]">
          <span className="text-[#6f8299]"><Icon size={14}><path d="M8 14.500C-2.500 8 2-.5 8 3.500c6-4 10.500 4.500 0 11Z" fill="currentColor" stroke="none" /></Icon></span>
          自选
        </button>
        <button aria-label="提醒" className="ml-auto flex size-[18px] items-center justify-center border border-[#d0d7e0]">
          <Icon size={12}><path d="M8 1c-3.500 0-5 2.500-5 5.500V11l-1.500 2h13L13 11V6.500C13 3.500 11.500 1 8 1ZM6 14h4v1.500H6Z" fill="currentColor" stroke="none" /></Icon>
        </button>
        <button className="h-[18px] w-[37px] overflow-hidden bg-[#f9900f] pl-1 text-left text-[12px] leading-[18px] text-[#2f2a20]">快捷交易</button>
      </div>
      <dl className="mt-[6px] grid grid-cols-[116px_116px_116px] text-[12px] leading-[18px] text-[#4c5869]">
        {STATS.map(([label, value, t, w], i) => (
          <div key={label} className="flex">
            <dt className={labelWidth[w]}>{label}</dt>
            <dd className={`font-['Liberation_Sans','Noto_Sans_CJK_SC',sans-serif] font-bold ${tone[t]}`}>{value}</dd>
            {i === 10 && <button aria-label="更多" className="ml-1 flex items-center text-[#8492a3]"><Ellipsis /></button>}
          </div>
        ))}
      </dl>
      <button aria-label="收起" className="flex h-[10px] w-[333px] items-center justify-center text-[#8492a3]"><Chevron up size={10} /></button>
      <a href="#news" className="mt-[11px] flex h-[31px] items-center rounded-l bg-[#eef1f6] pl-2 text-[12px] text-[#2f3a48]">
        <span className="mr-[5px] text-[#e06c5a]">
          <Icon size={15}><path d="M2 1.500h9v13H3.500L2 13ZM11 5h3v8l-1 1.500h-2M4.500 5h4M4.500 8h4M4.500 11h2.500" strokeWidth="1.300" /></Icon>
        </span>
        微信视频号：平台对于需要较高专业水平直播账号...
      </a>
    </section>
  );
}

const Layers = () => (
  <svg width="14" height="14" viewBox="0 0 14 14" className="shrink-0" aria-hidden="true">
    <path d="m7 1 6.500 4L7 9 .5 5Z" fill="#a9b8cb" />
    <path d="M1 8.200 7 12l6-3.800" fill="none" stroke="#a9b8cb" />
  </svg>
);

function Related() {
  return (
    <section className="pl-[6px] text-[12px] text-[#4c5869]">
      <div className="mt-[7px] flex h-[21px] items-center gap-[6px]">
        <svg width="14" height="12" viewBox="0 0 14 12" className="shrink-0" aria-hidden="true"><path d="M0 1.500C2.500 0 4.500.3 6.300 1.500v10C4.500 10.300 2.500 10.300 0 11.500ZM7.700 1.500C9.500.3 11.500 0 14 1.500v10c-2.500-1.200-4.500-1.200-6.300 0Z" fill="#a9b8cb" /></svg>
        <span>中国最大互联网综合服务提供商 富途证券战略投资方</span>
        <a href="#detail" className="ml-1 text-[#2e86d8]">详情</a>
      </div>
      <div className="flex h-[22px] items-center">
        <Layers />
        <span className="ml-[6px]">相关ADR</span>
        <span className="text-[#8492a3]"><Question /></span>
        <a href="#tcehy" className="ml-[6px] text-[#2e86d8]">TCEHY</a>
      </div>
      <p className="flex h-5 items-center pl-5 text-[#22960f]"><b>47.389↓</b><span>-0.791(-1.64%)</span></p>
      <p className="flex h-5 items-center pl-5">换算价(HKD)<b className="ml-[6px] text-[#22960f]">372.366</b><span className="ml-3">相对港股</span><span className="ml-[6px] text-[#22960f]">-4.634(-1.23%)</span></p>
      <div className="flex h-5 items-center">
        <Layers />
        <span className="ml-[6px]">相关期货</span>
        <a href="#futures" className="ml-1 text-[#2e86d8]">腾讯控股主连(2206)（TCHmain）</a>
      </div>
      <p className="flex h-5 items-center pl-5 text-[#c92a2e]"><b>377.23↑</b><span>+5.29(+1.42%)</span><span className="ml-[10px] text-[#4c5869]">高水</span><span className="ml-[10px]">0.23</span></p>
      <div className="flex h-5 items-center text-[#2e86d8]">
        <Layers />
        <span className="ml-[6px] text-[#4c5869]">相关窝轮</span>
        <div className="ml-[10px] flex gap-[11px]">
          <a href="#call">认股(631)</a>
          <a href="#bull">牛熊(605)</a>
          <a href="#inline">界内证(8)</a>
          <a href="#street">街货分析</a>
        </div>
      </div>
      <div className="flex h-6 items-center gap-[6px] text-[#2e86d8]">
        <svg width="14" height="14" viewBox="0 0 14 14" className="shrink-0" aria-hidden="true"><circle cx="7" cy="7" r="6.500" fill="#f39a1f" /><path d="M9.300 4.800C9 3.900 8 3.500 7 3.500c-1.200 0-2.200.6-2.200 1.600 0 2.300 4.600 1.300 4.600 3.700 0 1-1 1.700-2.400 1.700-1.200 0-2.200-.5-2.400-1.500M7 2v10" fill="none" stroke="#fff" strokeWidth="1.100" /></svg>
        <a href="#margin">支持融资 融资保证金率 30%</a>
      </div>
      <div className="flex h-5 items-center gap-[6px] text-[#2e86d8]">
        <svg width="14" height="12" viewBox="0 0 14 12" className="shrink-0" aria-hidden="true"><rect width="14" height="12" rx="1" fill="#2a87e8" /><path d="m2 4 3 2.500L7 4.500l4 4M11.500 5.500v3.500H8" fill="none" stroke="#fff" /></svg>
        <a href="#short" className="flex gap-1">
          <span>支持卖空</span>
          <span>卖空参考利率 0.96%</span>
          <span>卖空池剩余 395.27万股</span>
        </a>
      </div>
      <button aria-label="收起" className="flex h-[22px] w-[338px] items-end justify-center pb-[3px] text-[#8492a3]"><Chevron up size={10} /></button>
    </section>
  );
}

const TRADES: [string, boolean][] = [["100", false], ["700", false], ["300", false], ["1K", true]];
const LEVELS: [string, string, number, number][] = [
  ["379.000", "4.34K", 54, 8], ["378.800", "1.55K", 7, 13], ["378.600", "0.81K", 4, 5], ["378.400", "1.46K", 9, 9],
];

function Ticks() {
  return (
    <section className="border-t border-[#e3e6ea]">
      <h2 className="flex h-[29px] items-center pl-[6px] text-[12px] text-[#2f3a48]">
        逐笔成交
        <span className="ml-[9px] text-[#8492a3]"><Question /></span>
        <span className="ml-auto text-[#8492a3]"><Ellipsis /></span>
      </h2>
      <div className="flex h-[74px] overflow-hidden font-['Liberation_Sans'] text-[13px] leading-5">
        <ul className="-mt-[6px] w-[162px] text-[#c92a2e]">
          {TRADES.map(([size, last]) => (
            <li key={size} className={`flex items-center pr-[5px] ${last ? "h-5 border border-[#b5383d] bg-[#fde4e5] pl-[2px] font-bold" : "h-5 pl-[3px]"}`}>
              <span className="w-[47px] text-[#4c5869]">14:08</span>
              <span className="w-[50px]">377.000</span>
              <span className="mr-[6px] flex-1 text-right">{size}</span>
              <Triangle up color={RED} />
            </li>
          ))}
        </ul>
        <div className="flex w-[19px] items-end pb-[13px] pl-[3px]"><span className="h-[10px] w-2 bg-[#d3dce4]" /></div>
        <ul className="flex-1 text-[#c92a2e]">
          {LEVELS.map(([price, size, a, b]) => (
            <li key={price} className="flex h-5 items-center">
              <span className="w-[76px]">{price}</span>
              <span className="relative flex h-5 w-[66px] items-center">
                <span className="h-2 bg-[#e8161b]" style={{ width: a }} />
                <span className="h-2 bg-[#22960f]" style={{ width: b }} />
                <span className="absolute left-[42px] text-[#4c5869]">{size}</span>
              </span>
            </li>
          ))}
        </ul>
      </div>
    </section>
  );
}

const BIDS = [
  ["376.800", "5.6K", "19"], ["376.600", "5.6K", "10"], ["376.400", "10.4K", "8"], ["376.200", "11.2K", "10"], ["376.000", "12.1K", "17"],
  ["375.800", "15.4K", "10"], ["375.600", "1.1K", "3"], ["375.400", "7.4K", "3"], ["375.200", "12.1K", "8"], ["375.000", "16.4K", "29"],
];
const ASKS = [
  ["377.000", "6.2K", "9"], ["377.200", "23.3K", "21"], ["377.400", "20.8K", "18"], ["377.600", "20.2K", "16"], ["377.800", "32.1K", "22"],
  ["378.000", "12.3K", "27"], ["378.200", "23.9K", "14"], ["378.400", "8.6K", "11"], ["378.600", "8.3K", "12"], ["378.800", "61.8K", "35"],
];

function Side({ rows, bid }: { rows: string[][]; bid: boolean }) {
  return (
    <table className={`shrink-0 table-fixed border-collapse font-['Liberation_Sans'] text-[13px] leading-5 ${bid ? "w-[175px] bg-[#f0f6fe] text-[#5a80ab]" : "w-[182px] bg-[#fcf2e6] text-[#9c7b62]"}`}>
      <colgroup>
        <col className="w-[19px]" />
        <col className="w-[58px]" />
        <col className="w-[62px]" />
        <col />
      </colgroup>
      <tbody>
        {rows.map(([price, vol, n], i) => (
          <tr key={price} className={`h-5 ${i ? "" : bid ? "bg-[#dcebfc]" : "bg-[#f8e5ce]"}`}>
            <td className="p-0 pl-[3px]">
              <span className={`block size-[13px] rounded-[1px] text-center font-['DejaVu_Sans'] text-[9px] leading-[13px] text-white ${bid ? "bg-[#3b8cea]" : "bg-[#f58d15]"}`}>{i + 1}</span>
            </td>
            <td className={`p-0 text-[#c0262d] ${i ? "" : "font-bold"}`}>{price}</td>
            <td className="p-0 text-right">{vol}(</td>
            <td className="p-0 text-right">{n})</td>
          </tr>
        ))}
      </tbody>
    </table>
  );
}

function OrderBook() {
  return (
    <section>
      <div className="flex h-[30px] items-center border-t border-[#e3e6ea] pl-[6px] text-[12px] text-[#2f3a48]">
        <h2 className="w-[175px]">买盘十档</h2>
        <h2>卖盘十档</h2>
      </div>
      <div className="flex h-5 font-['Liberation_Sans'] text-[12px] font-bold leading-[21px] text-white">
        <span className="w-[168px] bg-[#248cfb] pl-[6px]">47.90%</span>
        <span className="flex-1 overflow-hidden bg-[#fd9203] pl-[135px]">52.10%</span>
      </div>
      <div className="flex">
        <Side rows={BIDS} bid />
        <Side rows={ASKS} bid={false} />
      </div>
      <div className="mt-px flex h-[30px] items-center border-t border-[#e3e6ea] pl-[6px] text-[12px] text-[#2f3a48]">
        <h2 className="w-[175px]">买盘经纪</h2>
        <h2 className="w-[79px]">卖盘经纪</h2>
        <div className="flex items-center gap-[8px] text-[#8492a3]">
          <button aria-label="经纪"><Icon><circle cx="8" cy="5" r="3" /><path d="M1.500 15.500c0-4 2.500-5.500 6.500-5.500s6.500 1.500 6.500 5.500M8 10v5" /></Icon></button>
          <button aria-label="列表" className="relative">
            <Icon><rect x=".5" y=".5" width="15" height="15" /><path d="M4 3.500h2v9H4zM10 3.500h2v9h-2z" /></Icon>
            <span className="absolute -right-px -top-[2px] size-[6px] rounded-full bg-[#e04a4a]" />
          </button>
          <button className="size-4 border border-[#8492a3] text-center text-[10px] leading-[14px]">10</button>
        </div>
      </div>
    </section>
  );
}

function Sidebar() {
  return (
    <aside className="w-[324px] shrink-0 overflow-hidden whitespace-nowrap border-l border-[#dde1e6]">
      <nav className="flex h-[21px] border-b border-[#e3e6ea] text-[12px] leading-[14px] text-[#4c5869]">
        <button className="h-[21px] w-[88px] shrink-0 border-b border-[#ee8d1d] pb-[6px] text-[#ee8d1d]">报价</button>
        <button className="w-[88px] shrink-0 pb-[6px]">分析</button>
        <button className="relative w-[88px] shrink-0 pb-[6px]">
          资讯
          <span className="absolute right-[20px] top-[1px] size-[5px] rounded-full bg-[#e3202a]" />
        </button>
        <button className="w-[88px] shrink-0 pb-[6px]">评论</button>
      </nav>
      <Quote />
      <nav className="mt-3 flex h-[30px] items-center gap-8 border-y border-[#e3e6ea] pl-[15px] text-[12px] text-[#4c5869]">
        <button className="text-[#ee8d1d]">盘口</button>
        <button>资金</button>
        <button>异动</button>
      </nav>
      <Related />
      <Ticks />
      <OrderBook />
    </aside>
  );
}

export default function App() {
  return (
    <div className="flex h-screen overflow-hidden bg-white font-['Noto_Sans','Noto_Sans_CJK_SC',sans-serif]">
      <main className="min-w-0 flex-1 overflow-hidden whitespace-nowrap">
        <PeriodBar />
        <DrawingBar />
        <MaLegend />
        <PriceChart />
        <MacdLegend />
        <MacdChart />
        <Navigator />
        <IndicatorBar />
        <PageTabs />
      </main>
      <Sidebar />
    </div>
  );
}
